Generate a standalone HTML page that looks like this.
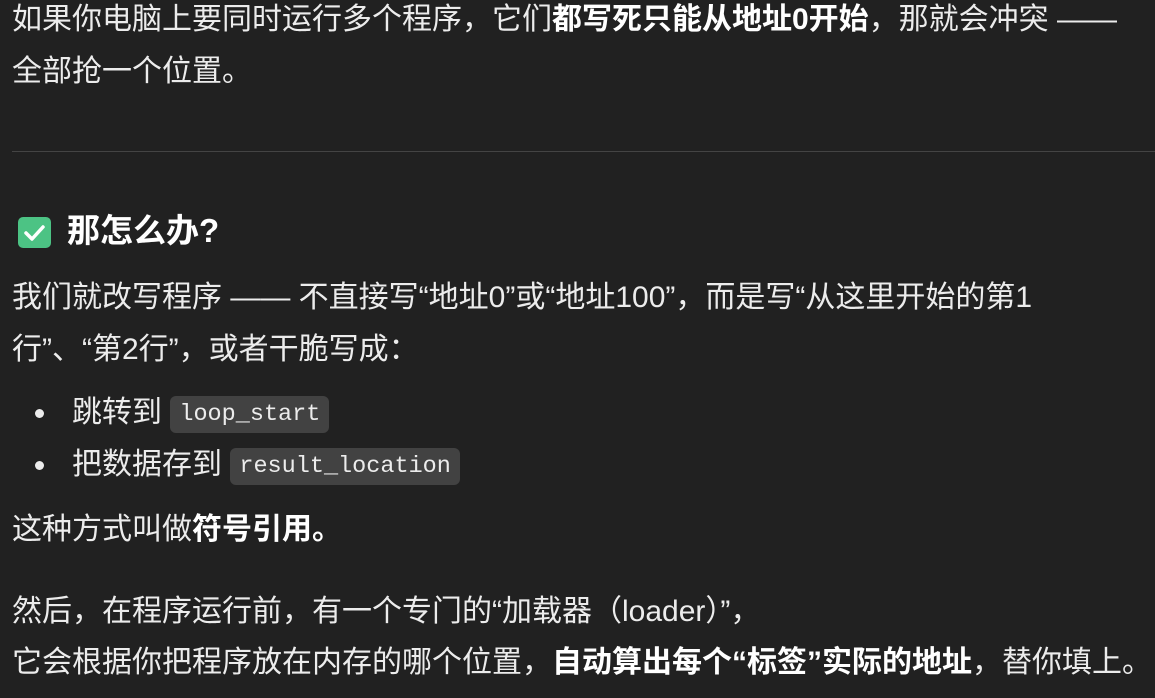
<!DOCTYPE html>
<html><head><meta charset="utf-8"><style>
html,body{margin:0;padding:0;background:#212121;width:1155px;height:698px;overflow:hidden}
body{font-family:"Liberation Sans","Noto Sans CJK SC",sans-serif;color:#ececec;font-size:30px;position:relative}
.l{position:absolute;left:12px;white-space:nowrap;line-height:40px}
b{font-weight:700;color:#fff}
.hr{position:absolute;left:12px;right:0;top:151px;height:1px;background:#444}
code{font-family:"Liberation Mono","DejaVu Sans Mono",monospace;font-size:23.5px;background:#424242;border-radius:6px;padding:5px 9px;color:#ececec;vertical-align:2px}
.dot{position:absolute;width:9px;height:9px;border-radius:50%;background:#ececec}
.chk{position:absolute;left:18px;top:217px;width:33px;height:31px;border-radius:5px;background:#4cc384}
</style></head><body>
<div class="l" style="top:0px">如果你电脑上要同时运行多个程序，它们<b>都写死只能从地址0开始</b>，那就会冲突 ——</div>
<div class="l" style="top:52px">全部抢一个位置。</div>
<div class="hr"></div>
<div class="chk"><svg width="33" height="31" viewBox="0 0 33 31"><path d="M8 16 L14 22 L25 10" stroke="#fff" stroke-width="3.5" fill="none" stroke-linecap="round" stroke-linejoin="round"/></svg></div>
<div class="l" style="top:211px;left:67px;font-size:33px;font-weight:700;color:#fff">那怎么办?</div>
<div class="l" style="top:278px">我们就改写程序 —— 不直接写“地址0”或“地址100”，而是写“从这里开始的第1</div>
<div class="l" style="top:330px">行”、“第2行”，或者干脆写成：</div>
<div class="dot" style="left:35px;top:409px"></div>
<div class="l" style="top:393px;left:72px">跳转到 <code>loop_start</code></div>
<div class="dot" style="left:35px;top:461px"></div>
<div class="l" style="top:445px;left:72px">把数据存到 <code>result_location</code></div>
<div class="l" style="top:510px">这种方式叫做<b>符号引用。</b></div>
<div class="l" style="top:592px">然后，在程序运行前，有一个专门的“加载器（loader）”，</div>
<div class="l" style="top:643px">它会根据你把程序放在内存的哪个位置，<b>自动算出每个“标签”实际的地址</b>，替你填上。</div>
</body></html>
